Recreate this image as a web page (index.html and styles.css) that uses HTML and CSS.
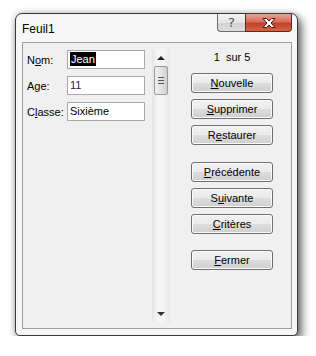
FILE: index.html
```html
<!DOCTYPE html>
<html lang="fr">
<head>
    <meta charset="UTF-8">
    <title>Feuil1</title>
    <link rel="stylesheet" href="styles.css">
</head>
<body>
    <div class="window">
        <div class="title-bar">
            <span class="title">Feuil1</span>
            <div class="caption-buttons">
                <div class="cap-btn help">?</div>
                <div class="cap-btn close">
                    <svg width="16" height="12" viewBox="0 0 16 12">
                        <path d="M2 1.5 L5.5 1.5 L8 4 L10.5 1.5 L14 1.5 L10 6 L14 10.5 L10.5 10.5 L8 8 L5.5 10.5 L2 10.5 L6 6 Z" fill="#fff" stroke="#4a1a14" stroke-width="1" stroke-linejoin="round"/>
                    </svg>
                </div>
            </div>
        </div>

        <div class="panel">
            <div class="fields">
                <div class="field">
                    <label>N<u>o</u>m:</label>
                    <div class="input"><span class="selected">Jean</span></div>
                </div>
                <div class="field">
                    <label>A<u>g</u>e:</label>
                    <div class="input num">11</div>
                </div>
                <div class="field">
                    <label>C<u>l</u>asse:</label>
                    <div class="input">Sixième</div>
                </div>
            </div>

            <div class="scrollbar">
                <div class="arrow up"></div>
                <div class="thumb">
                    <span></span><span></span><span></span>
                </div>
                <div class="track"></div>
                <div class="arrow down"></div>
            </div>

            <div class="actions">
                <div class="counter">1&nbsp; sur 5</div>
                <div class="btn-group">
                    <button type="button"><u>N</u>ouvelle</button>
                    <button type="button"><u>S</u>upprimer</button>
                    <button type="button">R<u>e</u>staurer</button>
                </div>
                <div class="btn-group nav">
                    <button type="button"><u>P</u>récédente</button>
                    <button type="button">S<u>u</u>ivante</button>
                    <button type="button"><u>C</u>ritères</button>
                </div>
                <div class="btn-group">
                    <button type="button"><u>F</u>ermer</button>
                </div>
            </div>
        </div>
    </div>
</body>
</html>
```

FILE: styles.css
```css
body {
    margin: 0;
    padding: 0;
    background-color: #fff;
    font-family: "Liberation Sans", Arial, sans-serif;
    font-size: 11px;
    color: #000;
}
u {
    text-decoration: underline;
    text-underline-offset: 1px;
}
.window {
    margin: 13px 0 0 15px;
    width: 283px;
    height: 323px;
    box-sizing: border-box;
    background: #f7f7f7;
    border: 1px solid #3a3a3a;
    border-radius: 7px 7px 5px 5px;
    box-shadow: 4px 5px 10px rgba(0, 0, 0, 0.55), 0 0 6px rgba(0, 0, 0, 0.25);
    display: flex;
    flex-direction: column;
}
.title-bar {
    height: 28px;
    display: flex;
    justify-content: space-between;
    align-items: flex-start;
}
.title {
    margin: 7px 0 0 6px;
    font-size: 12px;
    color: #000;
    line-height: 16px;
}
.caption-buttons {
    display: flex;
    margin-right: 5px;
}
.cap-btn {
    height: 18px;
    box-sizing: border-box;
    border: 1px solid #6b6b6b;
    border-top: none;
    display: flex;
    align-items: center;
    justify-content: center;
}
.help {
    width: 28px;
    border-radius: 0 0 0 4px;
    border-right: none;
    background: linear-gradient(#f4f4f4, #e4e4e4 50%, #d2d2d2 51%, #dcdcdc);
    color: #555;
    font-size: 13px;
    font-family: "DejaVu Sans", sans-serif;
    line-height: 16px;
}
.close {
    width: 47px;
    border-radius: 0 0 4px 0;
    border-color: #5b2a22;
    background: linear-gradient(#e8a493, #d46d5a 45%, #c2412b 55%, #d5633f);
}
.panel {
    margin: 0 0 0 6px;
    width: 270px;
    height: 287px;
    box-sizing: border-box;
    border: 1px solid #a0a0a0;
    background: #f0f0f0;
    display: flex;
    padding: 6px 0;
}
.fields {
    width: 129px;
    padding-top: 1px;
    display: flex;
    flex-direction: column;
    gap: 7px;
}
.field {
    display: flex;
    align-items: center;
    height: 19px;
}
.field label {
    width: 40px;
    padding-left: 4px;
    color: #000;
}
.input {
    width: 78px;
    height: 19px;
    box-sizing: border-box;
    border: 1px solid #a9a9a9;
    background: #fff;
    padding: 0 2px;
    line-height: 17px;
}
.input.num {
    color: #1c1c5a;
}
.selected {
    background: #000;
    color: #fff;
    padding: 1px 1px;
}
.scrollbar {
    width: 16px;
    display: flex;
    flex-direction: column;
    align-items: center;
    background: linear-gradient(90deg, #e8e8e8, #f5f5f5 30%, #f5f5f5 70%, #e8e8e8);
    border-left: 1px solid #e6e6e6;
    border-right: 1px solid #e6e6e6;
}
.arrow {
    width: 0;
    height: 0;
    border-left: 4px solid transparent;
    border-right: 4px solid transparent;
}
.arrow.up {
    margin: 7px 0 6px;
    border-bottom: 4px solid #222;
}
.arrow.down {
    margin: 0 0 6px;
    border-top: 4px solid #333;
}
.thumb {
    width: 14px;
    height: 29px;
    box-sizing: border-box;
    border: 1px solid #9a9a9a;
    border-radius: 2px;
    background: linear-gradient(90deg, #f0f0f0, #e2e2e2 55%, #cfcfcf);
    display: flex;
    flex-direction: column;
    align-items: center;
    justify-content: center;
    gap: 2px;
}
.thumb span {
    display: block;
    width: 6px;
    height: 1px;
    background: #555;
}
.track {
    flex: 1;
}
.actions {
    flex: 1;
    padding-left: 21px;
    display: flex;
    flex-direction: column;
}
.counter {
    width: 82px;
    text-align: center;
    height: 16px;
    line-height: 16px;
    margin-bottom: 8px;
}
.btn-group {
    display: flex;
    flex-direction: column;
    gap: 6px;
    margin-bottom: 17px;
}
.btn-group.nav {
    margin-bottom: 16px;
}
.btn-group button {
    width: 82px;
    height: 20px;
    padding: 0;
    font-family: inherit;
    font-size: 11px;
    color: #000;
    border: 1px solid #707070;
    border-radius: 3px;
    background: linear-gradient(#f2f2f2, #ebebeb 48%, #dddddd 52%, #cfcfcf);
    box-shadow: inset 0 0 0 1px #fbfbfb;
    line-height: 16px;
}
```
